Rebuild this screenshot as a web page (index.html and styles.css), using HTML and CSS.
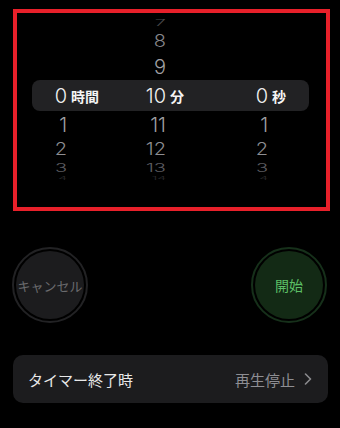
FILE: index.html
```html
<!DOCTYPE html>
<html lang="ja">
<head>
<meta charset="utf-8">
<link rel="stylesheet" href="styles.css">
</head>
<body>
<div class="frame">
  <div class="picker">
    <div class="row r7"><span class="n"></span><span></span><span class="n">7</span><span></span><span class="n"></span><span></span></div>
    <div class="row r8"><span class="n"></span><span></span><span class="n">8</span><span></span><span class="n"></span><span></span></div>
    <div class="row r9"><span class="n"></span><span></span><span class="n">9</span><span></span><span class="n"></span><span></span></div>
    <div class="row sel"><span class="n">0</span><span class="u">時間</span><span class="n">10</span><span class="u">分</span><span class="n">0</span><span class="u">秒</span></div>
    <div class="row r11"><span class="n">1</span><span></span><span class="n">11</span><span></span><span class="n">1</span><span></span></div>
    <div class="row r12"><span class="n">2</span><span></span><span class="n">12</span><span></span><span class="n">2</span><span></span></div>
    <div class="row r13"><span class="n">3</span><span></span><span class="n">13</span><span></span><span class="n">3</span><span></span></div>
    <div class="row r14"><span class="n">4</span><span></span><span class="n">14</span><span></span><span class="n">4</span><span></span></div>
  </div>
</div>
<div class="buttons">
  <div class="btn cancel"><span>キャンセル</span></div>
  <div class="btn start"><span>開始</span></div>
</div>
<div class="setting">
  <span class="label">タイマー終了時</span>
  <span class="value">再生停止</span>
  <svg class="chev" width="8" height="12" viewBox="0 0 8 12"><path d="M1.5 1 L6.5 6 L1.5 11" fill="none" stroke="#8a8a8e" stroke-width="1.6" stroke-linecap="round" stroke-linejoin="round"/></svg>
</div>
</body>
</html>
```
FILE: styles.css
```css
html, body {
  margin: 0;
  padding: 0;
  background: #000;
}
body {
  width: 340px;
  height: 428px;
  overflow: hidden;
  font-family: Inter, "Noto Sans CJK JP", sans-serif;
  color: #fff;
}
.frame {
  margin: 9px 0 0 13px;
  width: 309px;
  height: 194px;
  border: 4px solid #e8202a;
  overflow: hidden;
}
.picker {
  display: flex;
  flex-direction: column;
  padding-top: 1px;
}
.row {
  display: grid;
  grid-template-columns: 50px 49px 50px 50px 52px 1fr;
  align-items: center;
  font-size: 20px;
  font-weight: 300;
  line-height: 1;
  color: #a3a3a6;
}
.row .n {
  text-align: right;
}
.r7 { height: 14px; color: #4a4a4c; transform: scaleY(.45); }
.r8 { height: 26px; color: #86868a; transform: scaleY(.85); }
.r9 { height: 26px; color: #a0a0a4; }
.sel {
  height: 31px;
  margin: 0 17px 0 15px;
  grid-template-columns: 35px 49px 50px 50px 52px 1fr;
  background: #222224;
  border-radius: 8px;
  color: #f2f2f2;
}
.sel .u {
  font-family: "Noto Sans CJK JP", sans-serif;
  font-weight: 700;
  font-size: 14px;
  padding-left: 4px;
  color: #f5f5f5;
}
.r11 { height: 27px; color: #a0a0a4; }
.r12 { height: 22px; color: #8e8e92; transform: scaleY(.85); }
.r13 { height: 13px; color: #5c5c60; transform: scaleY(.55); }
.r14 { height: 9px; font-size: 14px; color: #2a2a2c; transform: scaleY(.35); }

.buttons {
  display: flex;
  justify-content: space-between;
  margin: 36px 13px 0 12px;
}
.btn {
  width: 68px;
  height: 68px;
  border-radius: 50%;
  border: 2px solid #222224;
  padding: 2px;
  background-clip: content-box;
  display: flex;
  align-items: center;
  justify-content: center;
  font-family: "Noto Sans CJK JP", sans-serif;
  font-size: 14px;
}
.cancel {
  background-color: #1c1c1e;
  color: #6a6a6d;
  font-size: 13px;
}
.start {
  background-color: #132a15;
  border-color: #16301a;
  color: #5cbf66;
}
.setting {
  margin: 32px 0 0 13px;
  width: 315px;
  height: 48px;
  border-radius: 10px;
  background: #1c1c1e;
  display: flex;
  align-items: center;
  padding: 0 16px 0 15px;
  box-sizing: border-box;
  font-family: "Noto Sans CJK JP", sans-serif;
  font-size: 15px;
}
.label {
  color: #e8e8e8;
  flex: 1;
}
.value {
  color: #8e8e93;
  margin-right: 9px;
}
.chev {
  display: block;
}
```
